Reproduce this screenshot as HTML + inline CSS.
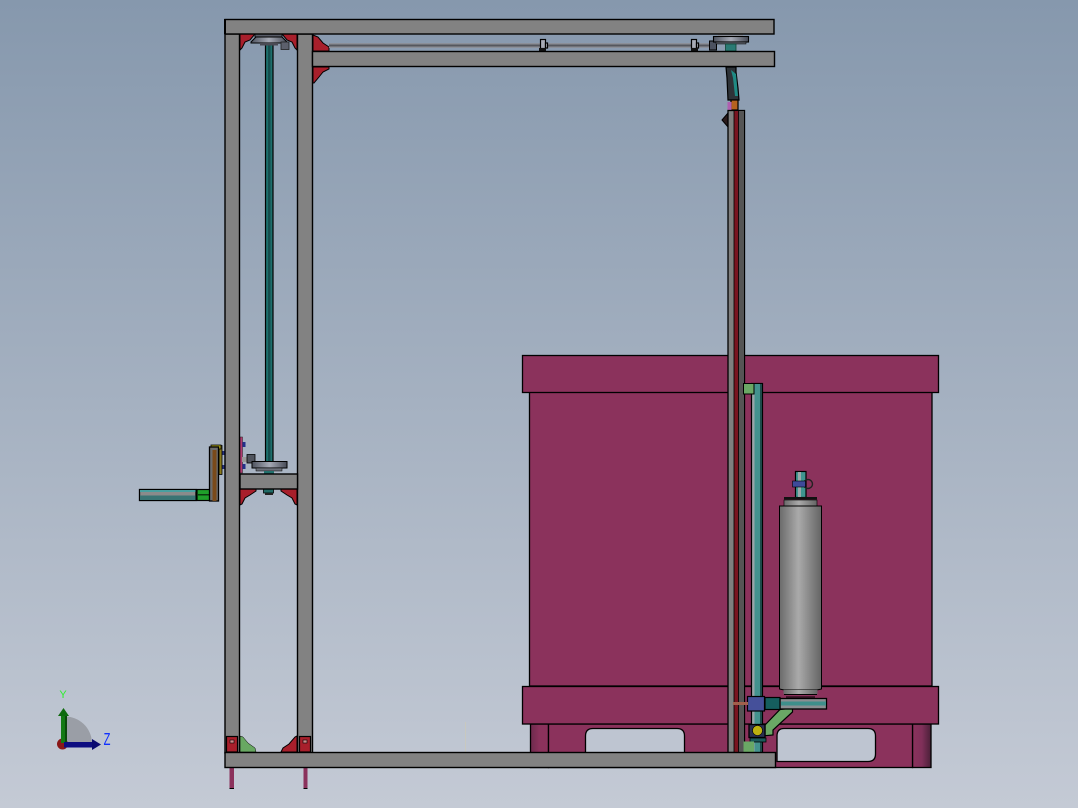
<!DOCTYPE html>
<html lang="en">
<head>
<meta charset="utf-8">
<title>CAD Assembly</title>
<style>
html,body{margin:0;padding:0;width:1078px;height:808px;overflow:hidden;background:#a5b0c0}
svg{display:block}
</style>
</head>
<body>
<svg width="1078" height="808" viewBox="0 0 1078 808" xmlns="http://www.w3.org/2000/svg">
<defs>
<linearGradient id="bg" x1="0" y1="0" x2="0" y2="1">
<stop offset="0" stop-color="#8698ad"/>
<stop offset="1" stop-color="#c4cad5"/>
</linearGradient>
<linearGradient id="cyl" x1="0" y1="0" x2="1" y2="0">
<stop offset="0" stop-color="#6a6a6a"/>
<stop offset=".45" stop-color="#aaaaaa"/>
<stop offset="1" stop-color="#646464"/>
</linearGradient>
<linearGradient id="pul" x1="0" y1="0" x2="1" y2="0">
<stop offset="0" stop-color="#4e535f"/>
<stop offset=".5" stop-color="#a6aab6"/>
<stop offset="1" stop-color="#464a56"/>
</linearGradient>
<linearGradient id="baseL" x1="0" y1="0" x2="1" y2="0">
<stop offset="0" stop-color="#6d2a4c"/>
<stop offset=".5" stop-color="#8b325c"/>
<stop offset="1" stop-color="#8b325c"/>
</linearGradient>
<linearGradient id="baseR" x1="0" y1="0" x2="1" y2="0">
<stop offset="0" stop-color="#8b325c"/>
<stop offset=".5" stop-color="#80305a"/>
<stop offset="1" stop-color="#4a2038"/>
</linearGradient>
</defs>
<rect width="1078" height="808" fill="url(#bg)"/>

<!-- Purple box -->
<g stroke="#000" stroke-width="1.3">
<rect x="530.5" y="724" width="18" height="43.5" fill="url(#baseL)"/>
<rect x="912.5" y="724" width="18.5" height="43.5" fill="url(#baseR)"/>
<rect x="548.5" y="724" width="364" height="43.5" fill="#8b325c"/>
<rect x="529.5" y="392" width="402.5" height="294" fill="#8b325c"/>
<rect x="522.5" y="355.5" width="416" height="37" fill="#8b325c"/>
<rect x="522.5" y="686.5" width="416" height="37.5" fill="#8b325c"/>
<path d="M585.5 753V736Q585.5 728.5 593 728.5H677Q684.5 728.5 684.5 736V753Z" fill="#bec5d1"/>
<path d="M777 761.5V736Q777 728.5 784 728.5H868Q875.5 728.5 875.5 736V754Q875.5 761.5 868 761.5Z" fill="#bec5d1"/>
</g>

<!-- Gussets -->
<g fill="#a81f2b" stroke="#000" stroke-width="1">
<path d="M240 34H255L250 40L245 42L242 48L240 50Z"/>
<path d="M297 34H282L287 40L292 42L295 48L297 50Z"/>
<path d="M313 35L318 37L323 43L329 47V51H313Z"/>
<path d="M313 67H329V69L323 72L319 77L314 83H313Z"/>
<path d="M240 489H256V491L250 495L245 498L242 504L240 505Z"/>
<path d="M297 489H281V491L287 495L292 498L295 504L297 505Z"/>
<path d="M297 736L295 737L289 744L283 748L281 752H297Z"/>
</g>
<path d="M240 736L243 737L248 743L255 748L256 752H240Z" fill="#68a862" stroke="#000" stroke-width=".5"/>

<!-- Vertical shaft -->
<rect x="265.5" y="40" width="7.5" height="422" fill="#1d6f6c" stroke="#000" stroke-width="1.2"/>
<rect x="268" y="40" width="2.5" height="422" fill="#164e4e"/>

<!-- Top left pulley -->
<rect x="255" y="34" width="27" height="3" fill="#565a66" stroke="#000" stroke-width=".8"/>
<path d="M251 42L256 37H282L287 42V43H251Z" fill="url(#pul)" stroke="#000" stroke-width="1"/>
<rect x="260" y="43" width="18" height="2.5" fill="#4a4a54"/>
<rect x="281" y="42" width="8" height="7.5" fill="#5c606c" stroke="#222" stroke-width=".8"/>

<!-- Top shaft -->
<rect x="329" y="43" width="385" height="5" fill="#8b8f98"/>
<rect x="329" y="44.5" width="385" height="2" fill="#55575d"/>
<g fill="#a8acb6" stroke="#000" stroke-width="1.2">
<rect x="540.5" y="39.5" width="5" height="9"/>
<rect x="691.5" y="39.5" width="5" height="9"/>
<rect x="545.5" y="43" width="2" height="5"/>
<rect x="696.5" y="43" width="2" height="5"/>
</g>
<rect x="539" y="48" width="7" height="3" fill="#111"/>
<rect x="691" y="48" width="7" height="3" fill="#111"/>
<rect x="709.5" y="41" width="7" height="9" fill="#4c5260" stroke="#000" stroke-width="1"/>

<!-- Top right pulley -->
<rect x="718" y="34" width="25" height="2.5" fill="#8e929c"/>
<rect x="713.5" y="36.5" width="35" height="5.5" fill="url(#pul)" stroke="#000" stroke-width="1.1"/>
<rect x="716" y="42" width="30" height="2" fill="#585c66" stroke="#000" stroke-width=".5"/>
<rect x="725.5" y="44" width="10.5" height="7" fill="#2a7a74" stroke="#143" stroke-width=".8"/>

<!-- Linkage -->
<path d="M726 67H736V72L738 88L739 100H728L727 78Z" fill="#2e3338" stroke="#000" stroke-width="1.2"/>
<path d="M731 70L736 74L738 96L735 96L733 78Z" fill="#1f8a84"/>
<rect x="731" y="100" width="7" height="10" fill="#b5631f" stroke="#000" stroke-width="1.2"/>
<rect x="727.5" y="102" width="4" height="8" fill="#b060b0"/>
<path d="M722 120L728 113V127Z" fill="#2a1a1a" stroke="#000" stroke-width="1"/>

<!-- Right column -->
<rect x="728" y="110.5" width="16.5" height="642" fill="#7f7f7f" stroke="#000" stroke-width="1.3"/>
<rect x="734" y="111" width="4.5" height="641" fill="#7a1420"/>
<rect x="738.5" y="111" width="5.5" height="641" fill="#555"/>
<path d="M734 111V752M738.5 111V752" stroke="#000" stroke-width=".8"/>

<!-- Teal rod -->
<rect x="751.5" y="383.5" width="11" height="369" fill="#98a5a8" stroke="#000" stroke-width="1.2"/>
<rect x="754.5" y="384" width="5.5" height="368" fill="#43928e"/>
<rect x="760" y="384" width="2" height="368" fill="#1c4a4a"/>
<rect x="743.5" y="383.5" width="10.5" height="10.5" fill="#6aa865" stroke="#000" stroke-width="1"/>

<!-- Cylinder top -->
<rect x="795.5" y="471.5" width="10.5" height="26" fill="#3f9590" stroke="#000" stroke-width="1.2"/>
<rect x="798" y="472" width="3" height="25" fill="#9aa8aa"/>
<circle cx="808" cy="484" r="4.5" fill="none" stroke="#222" stroke-width="1.4"/>
<rect x="792.5" y="481" width="13" height="6" fill="#3e4a9a" stroke="#000" stroke-width=".6"/>
<rect x="784" y="497" width="33" height="2.5" fill="#111"/>
<rect x="784" y="500" width="33" height="6" fill="url(#cyl)" stroke="#000" stroke-width=".6"/>
<path d="M779.5 506H821.5V689L817 690H784L779.5 689Z" fill="url(#cyl)" stroke="#000" stroke-width="1"/>
<rect x="783.5" y="690" width="34" height="4" fill="url(#cyl)"/>
<path d="M784 694.5H817M786 697H815" stroke="#000" stroke-width="1"/>

<!-- Lower assembly -->
<path d="M765 725L780 709.5L792.5 708V712L773 730V735L765 735.7Z" fill="#6aa865" stroke="#000" stroke-width="1.2"/>
<rect x="780" y="698.5" width="46.5" height="10.5" fill="#8a8f92" stroke="#000" stroke-width="1.3"/>
<rect x="781" y="701.5" width="45" height="4" fill="#3e8f8b"/>
<rect x="765" y="697.5" width="15" height="12" fill="#155e5e" stroke="#000" stroke-width="1.2"/>
<rect x="747.5" y="696.5" width="17" height="14.5" fill="#45509a" stroke="#000" stroke-width="1.2"/>
<rect x="733" y="702" width="15" height="3" fill="#a0604c"/>
<rect x="749" y="724.5" width="16" height="13" fill="#2a3050" stroke="#000" stroke-width="1.3"/>
<circle cx="757.5" cy="730.5" r="5" fill="#bcb010" stroke="#000" stroke-width=".6"/>
<rect x="750" y="738" width="16" height="4" fill="#1c5a5a" stroke="#000" stroke-width=".8"/>
<rect x="743.5" y="741.5" width="10.5" height="11" fill="#6aa865"/>

<!-- Faint mark -->
<rect x="465" y="722" width="1" height="30" fill="#ccc9b8" opacity=".7"/>

<!-- Hand crank left -->
<rect x="240" y="437" width="2.5" height="36" fill="#b03a70" stroke="#222" stroke-width=".5"/>
<rect x="242.5" y="442" width="3" height="5" fill="#22308a"/>
<rect x="242.5" y="464" width="3" height="5" fill="#22308a"/>
<rect x="222" y="451" width="3" height="4" fill="#25307a"/>
<rect x="222" y="465" width="3" height="4" fill="#25307a"/>
<rect x="242" y="457" width="13" height="5" fill="#9a9a9a"/>
<rect x="247" y="454.5" width="8" height="8.5" fill="#50545e" stroke="#000" stroke-width=".8"/>
<rect x="252" y="461.5" width="35" height="6.5" fill="url(#pul)" stroke="#000" stroke-width="1"/>
<rect x="256" y="468" width="26" height="3" fill="#6c707a" stroke="#000" stroke-width=".5"/>
<rect x="264" y="471" width="10" height="3" fill="#22706c"/>
<rect x="263.5" y="489" width="10" height="4" fill="#1f6a66" stroke="#000" stroke-width=".8"/>
<rect x="265" y="493" width="8" height="2" fill="#222"/>

<rect x="139.5" y="489.5" width="56.5" height="11" fill="#8b8b8b" stroke="#000" stroke-width="1.3"/>
<rect x="140" y="490" width="55.5" height="2" fill="#48a0a0"/>
<rect x="140" y="495.5" width="55.5" height="4.5" fill="#3a7474"/>
<rect x="197" y="489.5" width="13" height="11" fill="#1fa02a" stroke="#000" stroke-width="1.2"/>
<rect x="197" y="494" width="13" height="1.5" fill="#0b3a10"/>
<rect x="219" y="445.5" width="3" height="29" fill="#8a7a1a" stroke="#000" stroke-width=".8"/>
<rect x="211" y="445" width="10" height="4" fill="#a8a018" stroke="#000" stroke-width=".8"/>
<rect x="209.5" y="447" width="9" height="54" fill="#6c6c6c" stroke="#000" stroke-width="1.3"/>
<rect x="212.5" y="450" width="4" height="51" fill="#7a4a1a"/>

<!-- Frame beams -->
<g fill="#828282" stroke="#000" stroke-width="1.4">
<rect x="225" y="34" width="14.5" height="719"/>
<rect x="297.5" y="34" width="15" height="719"/>
<rect x="240" y="474" width="57.5" height="15"/>
<rect x="225" y="19.5" width="549" height="14.5"/>
<rect x="312.5" y="51.5" width="462" height="15"/>
</g>
<path d="M225 19V34" stroke="#000" stroke-width="2"/>

<!-- Corner blocks -->
<g stroke="#000" stroke-width="1.2">
<rect x="226.5" y="736.5" width="11" height="15.5" fill="#a81f2b"/>
<rect x="299.5" y="736.5" width="11" height="15.5" fill="#a81f2b"/>
</g>
<rect x="230" y="740" width="4" height="3" fill="#c88" stroke="#000" stroke-width=".6"/>
<rect x="303" y="740" width="4" height="3" fill="#c88" stroke="#000" stroke-width=".6"/>

<!-- Bottom beam and legs -->
<rect x="229.5" y="768" width="4.5" height="20.5" fill="#8b325c"/>
<rect x="303.5" y="768" width="4" height="20.5" fill="#8b325c"/>
<rect x="229.5" y="788" width="4.5" height="1" fill="#000"/>
<rect x="303.5" y="788" width="4" height="1" fill="#000"/>
<rect x="225" y="752.5" width="550.5" height="15" fill="#828282" stroke="#000" stroke-width="1.4"/>

<!-- Triad -->
<path d="M64 743V716.5A27 27 0 0 1 92 743Z" fill="#9a9ea6"/>
<circle cx="62.5" cy="744" r="5.5" fill="#8a1818"/>
<rect x="61" y="716" width="6" height="27" fill="#137a13"/>
<rect x="65" y="716" width="2" height="27" fill="#0b4a0b"/>
<path d="M58 716L63.5 708L69 716Z" fill="#0e6a0e"/>
<rect x="64" y="742" width="28" height="5.5" fill="#0d0d80"/>
<path d="M92 739L101 744.5L92 750Z" fill="#0a0a70"/>
<text x="63" y="698" font-family="Liberation Sans, sans-serif" font-size="11" fill="#2df02d" text-anchor="middle">Y</text>
<text transform="translate(107 745) scale(.62 1)" font-family="Liberation Sans, sans-serif" font-size="18" fill="#1030ff" text-anchor="middle">Z</text>
</svg>
</body>
</html>
